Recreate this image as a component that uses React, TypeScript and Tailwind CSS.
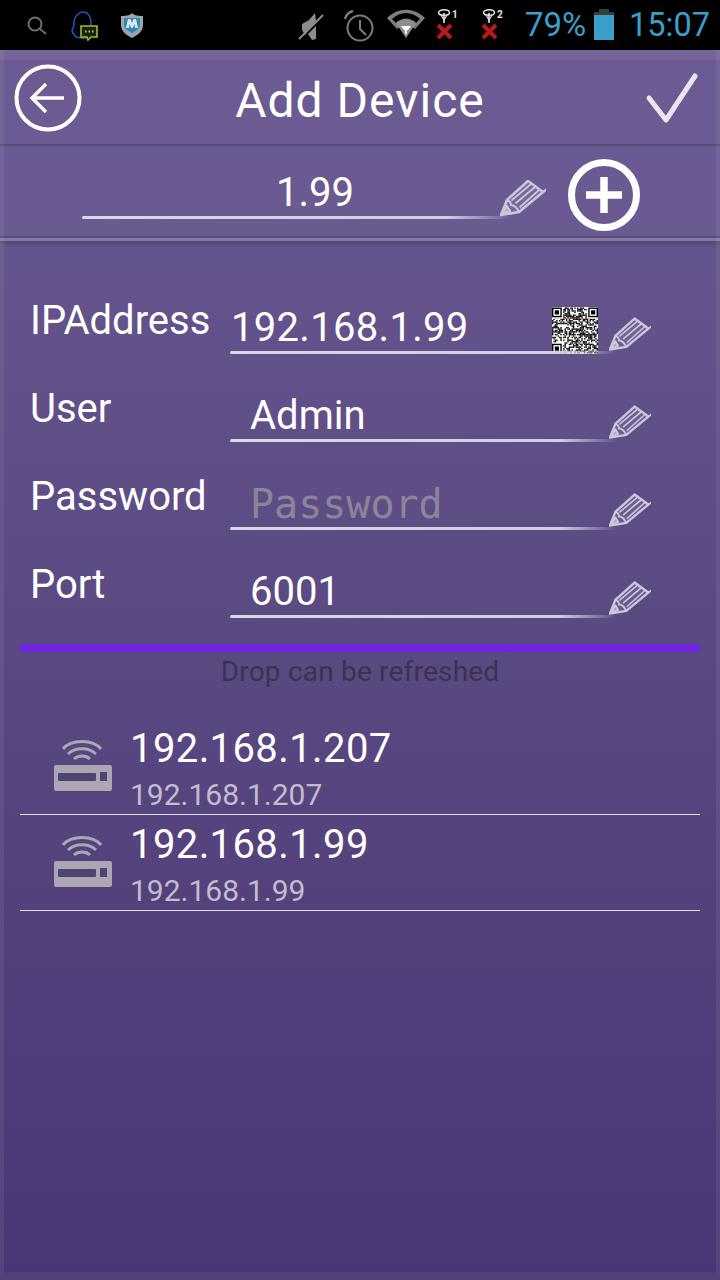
import React from "react";

// deterministic noise for the QR modules, finder squares drawn on top
function qrCell(x: number, y: number) {
  const n = Math.sin(x * 12.9898 + y * 78.233) * 43758.5453;
  return n - Math.floor(n) > 0.48;
}

function Finder({ x, y }: { x: number; y: number }) {
  return (
    <g>
      <rect x={x - 1} y={y - 1} width="9" height="9" fill="#fff" />
      <rect x={x} y={y} width="7" height="7" fill="#000" />
      <rect x={x + 1} y={y + 1} width="5" height="5" fill="#fff" />
      <rect x={x + 2} y={y + 2} width="3" height="3" fill="#000" />
    </g>
  );
}

function QrCode() {
  const cells = [];
  for (let y = 0; y < 33; y++) {
    for (let x = 0; x < 33; x++) {
      if (qrCell(x, y)) cells.push(<rect key={x + "-" + y} x={x} y={y} width="1" height="1" fill="#000" />);
    }
  }
  return (
    <svg width="46" height="47" viewBox="0 0 33 33" className="bg-white block">
      {cells}
      <Finder x={0} y={0} />
      <Finder x={26} y={0} />
      <Finder x={0} y={26} />
    </svg>
  );
}

// sketchy pencil used beside every input
function Pencil({ w }: { w: number }) {
  return (
    <svg width={w} height="37" viewBox="0 0 46 37" fill="none" stroke="#cdc6d9" strokeWidth="2.2" strokeLinejoin="round" strokeLinecap="round">
      <path d="M1 35 L7 20 L28 1 L43 12 L19 32 Z" fill="#cdc6d9" fillOpacity="0.12" strokeWidth="2.6" />
      <path d="M7 20 C10 21 11 23 11 25 C14 25 17 28 19 32" />
      <path d="M12 20 L31 4 M16 23 L35 7 M20 27 L39 10" strokeWidth="1.8" />
      <path d="M2 34 L10 31 L7 26 Z" fill="#cdc6d9" fillOpacity="0.6" />
      <path d="M43 12 L46 10" />
    </svg>
  );
}

function Underline({ className }: { className: string }) {
  return <div className={"h-[3px] rounded-full blur-[0.4px] bg-gradient-to-r from-[#dcd6e6] from-0% via-[#d3cddf] via-85% to-[#d3cddf00] " + className} />;
}

function Router() {
  return (
    <svg width="60" height="54" viewBox="0 0 60 54" fill="none">
      <path d="M10 11 C18 1 40 1 48 11" stroke="#aaa6b2" strokeWidth="3" />
      <path d="M15 16 C22 9 36 9 43 16" stroke="#aaa6b2" strokeWidth="3" />
      <path d="M21 21 C25 17 33 17 37 21" stroke="#aaa6b2" strokeWidth="3" />
      <rect x="1" y="27" width="58" height="26" rx="2" fill="#aaa6b2" />
      <rect x="5" y="35" width="38" height="8" rx="1" fill="#4f4370" />
      <rect x="47" y="34" width="7" height="9" fill="#4f4370" />
    </svg>
  );
}

function Antenna({ n }: { n: string }) {
  return (
    <svg width="28" height="32" viewBox="0 0 28 32" fill="none">
      <ellipse cx="8" cy="4.5" rx="5.5" ry="2.8" stroke="#e5e5e5" strokeWidth="1.4" />
      <path d="M8 5 V15" stroke="#e5e5e5" strokeWidth="1.6" />
      <path d="M5 7 L8 12 L11 7" stroke="#e5e5e5" strokeWidth="1.2" />
      <path d="M2 17 L15 30 M15 17 L2 30" stroke="#b81a1c" strokeWidth="4" />
      <text x="16" y="9.5" fontSize="10" fontWeight="700" fill="#e5e5e5" fontFamily="Roboto, sans-serif">{n}</text>
    </svg>
  );
}

function Field({ label, value, placeholder, qr, indent }: { label: string; value: string; placeholder?: boolean; qr?: boolean; indent?: boolean }) {
  return (
    <div className="h-[88px] flex">
      <div className="w-[200px] pl-[30px] shrink-0 text-[40px] leading-[44px] text-white whitespace-nowrap">{label}</div>
      <div className="relative w-[420px] ml-[30px] h-[88px] shrink-0">
        <div className={"absolute top-[5px] left-0 h-[48px] whitespace-nowrap " + (indent ? "pl-[20px]" : "pl-[1px]")}>
          {placeholder ? (
            <span className="text-[40px] leading-[48px] text-[#8b8598] font-['DejaVu_Sans_Mono',monospace]">{value}</span>
          ) : (
            <span className={"text-[40px] leading-[48px] text-white " + (qr ? "tracking-[0.3px]" : "tracking-normal")}>{value}</span>
          )}
        </div>
        {qr && (
          <div className="absolute left-[322px] top-[8px]">
            <QrCode />
          </div>
        )}
        <div className="absolute left-[379px] top-[17px]">
          <Pencil w={42} />
        </div>
        <Underline className="absolute left-0 top-[52px] w-[388px]" />
      </div>
    </div>
  );
}

function DeviceRow({ ip }: { ip: string }) {
  return (
    <div className="h-[96px] border-b border-[#e4e0ec] flex box-border">
      <div className="w-[110px] shrink-0 pl-[33px] pt-[19px]">
        <Router />
      </div>
      <div className="flex flex-col">
        <div className="text-[40px] leading-[48px] mt-[6px] text-white tracking-[0.4px]">{ip}</div>
        <div className="text-[30px] leading-[36px] mt-[4px] text-[#c3bccf]">{ip}</div>
      </div>
    </div>
  );
}

export default function App() {
  return (
    <div className="w-[720px] h-[1280px] flex flex-col overflow-hidden bg-black font-['Roboto',sans-serif]">
      {/* status bar */}
      <div className="h-[50px] shrink-0 bg-black flex items-center relative">
        <svg className="absolute left-[27px] top-[16px]" width="20" height="20" viewBox="0 0 20 20" fill="none" stroke="#6e6e6e" strokeWidth="2">
          <circle cx="8" cy="8" r="6.5" />
          <path d="M13 13 L19 18" />
        </svg>
        <svg className="absolute left-[70px] top-[10px]" width="30" height="32" viewBox="0 0 30 32" fill="none">
          <path d="M16 28 C10 29 9 27 6 27 C5 24 2 24 2 20 C4 18 4 14 4 11 C5 5 10 2 13 2 C18 2 21 7 21 12 L21 17" stroke="#1d58b0" strokeWidth="1.6" />
          <path d="M11 16 H27 V27 H21 L18 30 L17 27 H11 Z" fill="#1c2408" stroke="#9cbb3c" strokeWidth="1.6" />
          <path d="M15 21.5 H16.5 M18.5 21.5 H20 M22 21.5 H23.5" stroke="#b9d261" strokeWidth="2" />
        </svg>
        <svg className="absolute left-[120px] top-[13px]" width="24" height="25" viewBox="0 0 24 25">
          <path d="M1 3 C8 3 10 2 12 0 C14 2 16 3 23 3 L23 12 C23 18 18 22 12 25 C6 22 1 18 1 12 Z" fill="#9ba5ab" />
          <path d="M4 5 H20 V12 C20 15 16 18 12 20 C8 18 4 15 4 12 Z" fill="#2f84b8" />
          <path d="M6 15 L8 6 H10.5 L12 10 L13.5 6 H16 L18 15 H15 L14.5 11 L12.8 15 H11.2 L9.5 11 L9 15 Z" fill="#dce6ea" />
        </svg>
        <svg className="absolute left-[298px] top-[12px]" width="28" height="28" viewBox="0 0 28 28" fill="none">
          <path d="M4 12 L11 8 L17 1 L18 9 L7 23 L4 18 Z M10 22 L14 28 L18 27 L18 14 Z" fill="#8c8c8c" />
          <path d="M1 27 L25 3" stroke="#8c8c8c" strokeWidth="2" />
        </svg>
        <svg className="absolute left-[342px] top-[9px]" width="34" height="34" viewBox="0 0 34 34" fill="none" stroke="#7b7b7b" strokeWidth="2">
          <circle cx="18" cy="19" r="12.5" />
          <path d="M18 11 V20 L24 26" />
          <path d="M3 10 C4 6 7 3 11 2" strokeWidth="2.6" />
        </svg>
        <svg className="absolute left-[386px] top-[8px]" width="40" height="31" viewBox="0 0 40 31" fill="none">
          <path d="M1 10 C12 -1 28 -1 39 10 L29 21 C25 17 15 17 11 21 Z" fill="#7e7e7e" />
          <path d="M6 11 C14 3 26 3 34 11 L30 15 C24 9 16 9 10 15 Z" fill="#000" />
          <path d="M10 15 C16 10 24 10 30 15 L20 30 Z" fill="#8d8d8d" />
          <path d="M15 18 H25 L22 22 H21 V25 L20 27 L19 25 V22 H18 Z" fill="#fff" />
        </svg>
        <div className="absolute left-[436px] top-[8px]">
          <Antenna n="1" />
        </div>
        <div className="absolute left-[481px] top-[8px]">
          <Antenna n="2" />
        </div>
        <span className="absolute left-[525px] top-[5px] text-[33px] leading-[40px] text-[#3a9fc9]">79%</span>
        <div className="absolute left-[594px] top-[9px] w-[20px] h-[31px] flex flex-col items-center">
          <div className="w-[10px] h-[3px] bg-[#3c3c3c]" />
          <div className="w-[20px] h-[3px] bg-[#3c3c3c]" />
          <div className="w-[20px] h-[25px] bg-[#3a9fc9]" />
        </div>
        <span className="absolute left-[629px] top-[5px] text-[32.5px] leading-[40px] text-[#3a9fc9]">15:07</span>
      </div>

      {/* app body */}
      <div className="relative flex-1 flex flex-col bg-gradient-to-b from-[#6a5a92] via-[#5a4881] to-[#4a3674]">
        {/* title bar */}
        <div className="h-[96px] shrink-0 relative flex items-center justify-center border-b-2 border-[#5a4c7c] bg-[#6b5b92] border-t-[10px] border-t-[#75659b] box-border">
          <svg className="absolute left-[14px] top-[4px]" width="68" height="68" viewBox="0 0 68 68" fill="none" stroke="#fff">
            <circle cx="34" cy="34" r="31.5" strokeWidth="4" />
            <path d="M50 34 H18 M32 20 L18 34 L32 48" strokeWidth="3.4" />
          </svg>
          <span className="text-[48px] leading-[56px] text-white -mt-[2px] tracking-[1px]">Add Device</span>
          <svg className="absolute left-[645px] top-[12px]" width="54" height="52" viewBox="0 0 54 52" fill="none" stroke="#e9e6ef" strokeWidth="5" strokeLinejoin="round" strokeLinecap="round">
            <path d="M4 26 L21 48 L50 4" />
          </svg>
        </div>

        {/* name row */}
        <div className="h-[95px] shrink-0 relative border-b-[3px] border-[#8478a3] bg-[#6b5a92] shadow-[0_3px_4px_#55467a,inset_0_-2px_0_#5b4e7c]">
          <div className="absolute left-[82px] top-[24px] w-[466px] text-center text-[40px] leading-[46px] text-white">1.99</div>
          <Underline className="absolute left-[82px] top-[70px] w-[430px]" />
          <div className="absolute left-[500px] top-[34px]">
            <Pencil w={46} />
          </div>
          <svg className="absolute left-[567px] top-[12px]" width="74" height="74" viewBox="0 0 74 74" fill="none" stroke="#fff">
            <circle cx="37" cy="37" r="32.5" strokeWidth="7" />
            <path d="M37 19 V55 M19 37 H55" strokeWidth="7.5" />
          </svg>
        </div>

        {/* form */}
        <div className="pt-[58px] shrink-0">
          <Field label="IPAddress" value="192.168.1.99" qr />
          <Field label="User" value="Admin" indent />
          <Field label="Password" value="Password" placeholder indent />
          <Field label="Port" value="6001" indent />
        </div>

        <div className="mx-[20px] h-[8px] -mt-[7px] bg-[#7127e0] shrink-0" />
        <div className="text-center text-[28px] leading-[34px] mt-[3px] text-[#3a3350] tracking-[0.2px] shrink-0">Drop can be refreshed</div>

        {/* discovered devices */}
        <div className="mx-[20px] mt-[30px] flex flex-col">
          <DeviceRow ip="192.168.1.207" />
          <DeviceRow ip="192.168.1.99" />
        </div>

        {/* soft lighter edge of the window background */}
        <div className="absolute inset-0 pointer-events-none border-x-[4px] border-x-[#ffffff10] border-b-[8px] border-b-[#ffffff0c]" />
      </div>
    </div>
  );
}
